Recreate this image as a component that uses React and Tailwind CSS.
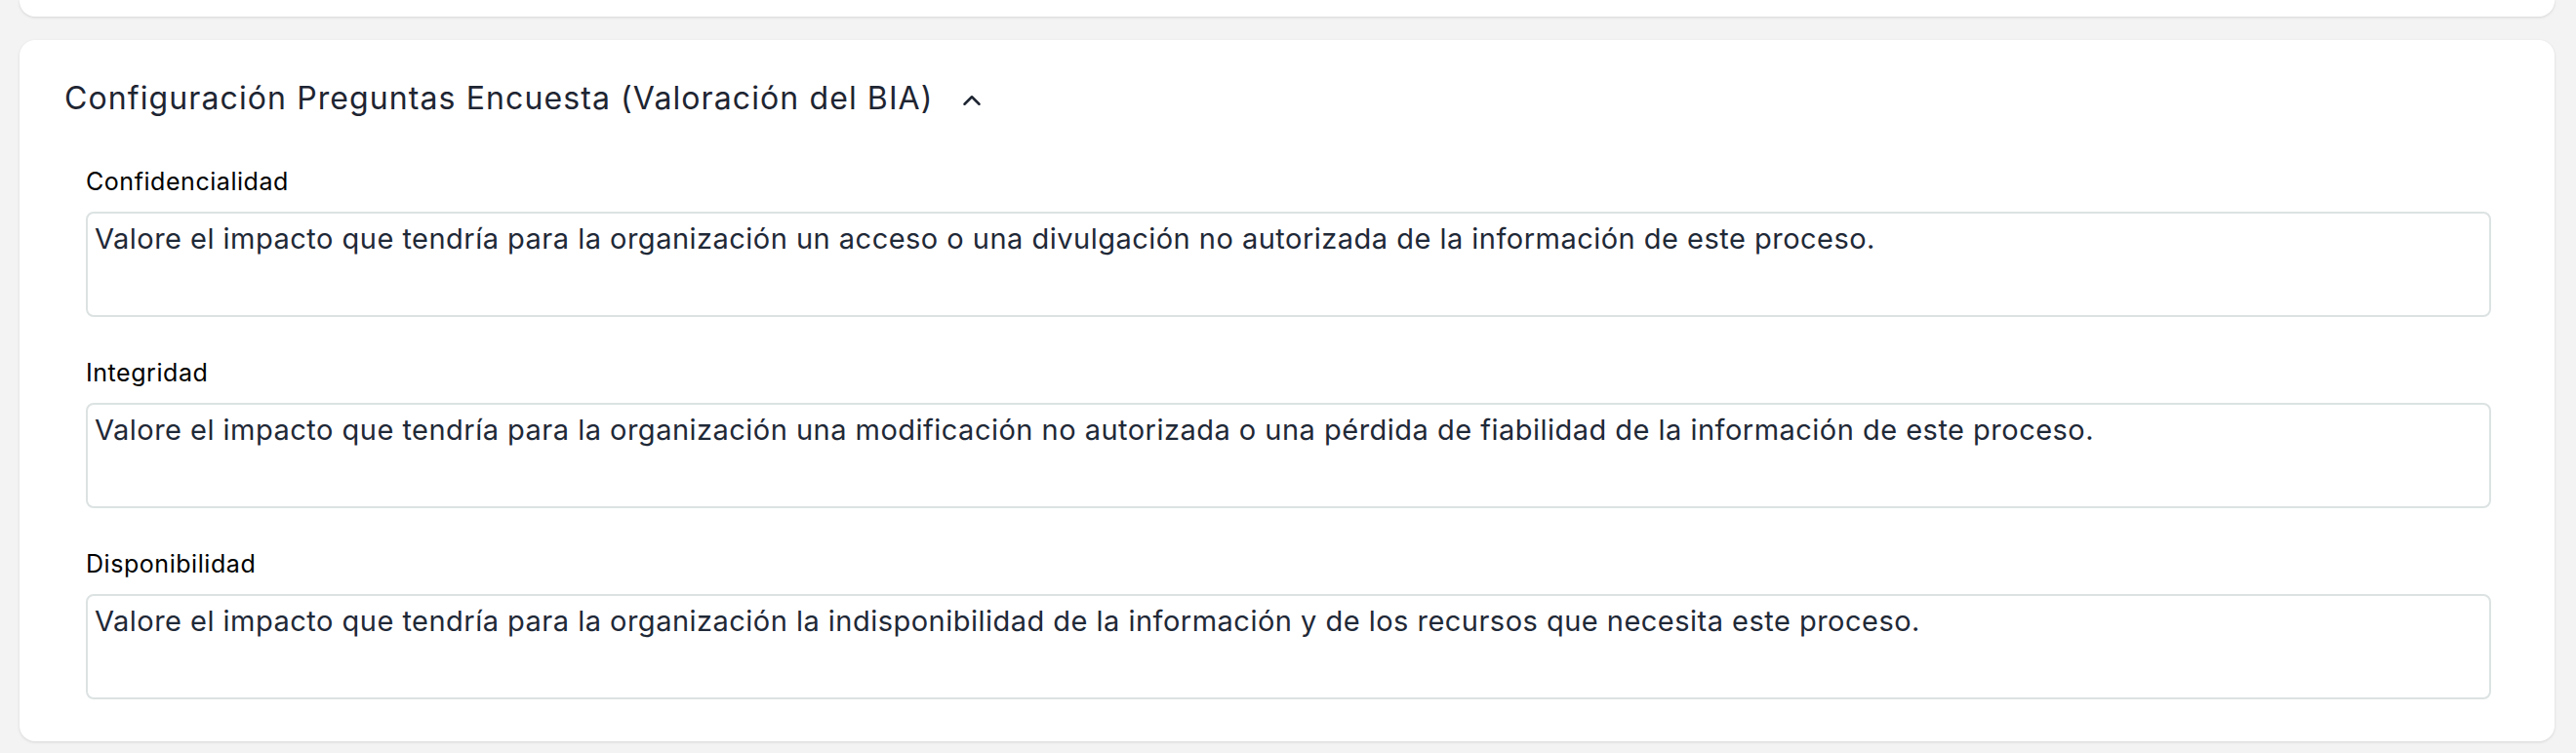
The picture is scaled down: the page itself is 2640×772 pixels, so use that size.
import { ChevronUp } from 'lucide-react';

const questions = [
  {
    label: 'Confidencialidad',
    text: 'Valore el impacto que tendría para la organización un acceso o una divulgación no autorizada de la información de este proceso.',
  },
  {
    label: 'Integridad',
    text: 'Valore el impacto que tendría para la organización una modificación no autorizada o una pérdida de fiabilidad de la información de este proceso.',
  },
  {
    label: 'Disponibilidad',
    text: 'Valore el impacto que tendría para la organización la indisponibilidad de la información y de los recursos que necesita este proceso.',
  },
];

function QuestionField({ label, text }) {
  return (
    <div className="flex flex-col">
      <label className="text-[25px] leading-[30px] tracking-[0.55px] text-black">{label}</label>
      <textarea
        readOnly
        defaultValue={text}
        className="mt-[16px] h-[108px] w-full resize-none rounded-[8px] border-2 border-[#dce2e2] bg-white px-[7px] pt-[6px] text-[29px] leading-[40px] tracking-[0.48px] text-[#1f2937] outline-none"
      />
    </div>
  );
}

export default function App() {
  return (
    <div
      className="min-h-screen bg-[#f3f3f3] pl-[20px] pr-[22px]"
      style={{ fontFamily: 'Inter, "Noto Sans", sans-serif' }}
    >
      <div className="h-[17px] rounded-b-[16px] bg-white shadow-[0_1px_3px_rgba(0,0,0,0.12)]" />
      <section className="mt-[24px] rounded-[16px] bg-white pb-[43px] pl-[46px] pr-[45px] pt-[38px] shadow-[0_1px_3px_rgba(0,0,0,0.12)]">
        <div className="flex items-center gap-[24px]">
          <h2 className="text-[32px] leading-[44px] tracking-[1.1px] text-[#1e2532]">
            Configuración Preguntas Encuesta (Valoración del BIA)
          </h2>
          <ChevronUp className="mt-[3px] h-[30px] w-[30px] text-[#1e2532]" strokeWidth={2} />
        </div>
        <div className="mt-[48px] flex flex-col gap-[42px] pl-[22px] pr-[20px]">
          {questions.map((q) => (
            <QuestionField key={q.label} label={q.label} text={q.text} />
          ))}
        </div>
      </section>
    </div>
  );
}
